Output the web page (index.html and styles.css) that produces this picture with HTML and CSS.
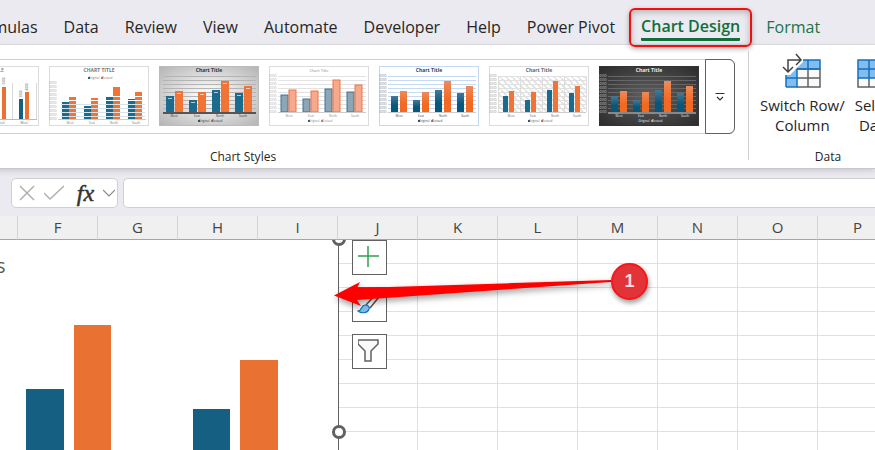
FILE: index.html
```
<!DOCTYPE html>
<html lang="en">

<head>
    <meta charset="UTF-8">
    <meta name="viewport" content="width=device-width, initial-scale=1.0">
    <title>Chart Design</title>
    <link rel="stylesheet" href="styles.css">
</head>

<body>
    <nav class="tabs">
        <a href="#" class="tab">Formulas</a>
        <a href="#" class="tab">Data</a>
        <a href="#" class="tab">Review</a>
        <a href="#" class="tab">View</a>
        <a href="#" class="tab">Automate</a>
        <a href="#" class="tab">Developer</a>
        <a href="#" class="tab">Help</a>
        <a href="#" class="tab">Power Pivot</a>
        <a href="#" class="tab active"><span>Chart Design</span></a>
        <a href="#" class="tab context">Format</a>
    </nav>

    <section class="ribbon">
        <div class="group styles-group">
            <div class="gallery">
                <div class="thumbs" id="thumbs"></div>
                <button class="more" aria-label="More styles">
                    <svg width="10" height="10" viewBox="0 0 10 10" fill="none" stroke="#333" stroke-width="1.2">
                        <path d="M.5 1.500h9M2 5l3 3 3-3" />
                    </svg>
                </button>
            </div>
            <div class="group-name">Chart Styles</div>
        </div>

        <div class="group data-group">
            <div class="commands">
                <button class="command">
                    <svg width="40" height="36" viewBox="0 0 40 36" fill="none">
                        <path d="M4 7h34v27H4z" fill="#fafafa" />
                        <path d="M4 7h34v9H15v18H4z" fill="#83bdee" />
                        <path d="M15 16h23M15 25h23M26 16v18M15 34h23V16" stroke="#616161" stroke-width="1.500" />
                        <path d="M4 34V7h34v9H4M4 25h11M4 34h11V7M26 7v9" stroke="#1072c4" stroke-width="1.500" />
                        <path d="M0 0h21v9L8 22H0z" fill="#fff" />
                        <path d="M6 19V7h13M1 14l5 5 5-5M14 1l5 6-5 5" stroke="#444" stroke-width="1.500" />
                    </svg>
                    <span>Switch Row/<br>Column</span>
                </button>
                <button class="command">
                    <svg width="40" height="36" viewBox="0 0 40 36" fill="none">
                        <path d="M3 7h34v27H3z" fill="#fafafa" />
                        <path d="M3 7h34v18H3z" fill="#83bdee" />
                        <path d="M3 25v9h34v-9M14 25v9M26 25v9" stroke="#616161" stroke-width="1.500" />
                        <path d="M3 7h34v18H3zM3 16h34M14 7v18M26 7v18" stroke="#1072c4" stroke-width="1.500" />
                    </svg>
                    <span>Select<br>Data</span>
                </button>
            </div>
            <div class="group-name">Data</div>
        </div>
    </section>

    <div class="formula-bar">
        <div class="formula-tools">
            <button aria-label="Cancel">
                <svg width="16" height="16" viewBox="0 0 16 16" fill="none" stroke="#b0b0b0" stroke-width="1.500"><path d="M1 1l14 14M15 1L1 15" /></svg>
            </button>
            <button aria-label="Enter">
                <svg width="20" height="16" viewBox="0 0 20 16" fill="none" stroke="#b0b0b0" stroke-width="1.500"><path d="M0 8l6 6L20 1" /></svg>
            </button>
            <button class="fx" aria-label="Insert function">fx</button>
            <button aria-label="Recent functions">
                <svg width="12" height="8" viewBox="0 0 12 8" fill="none" stroke="#888" stroke-width="1.200"><path d="M0 1l6 6 6-6" /></svg>
            </button>
        </div>
        <input type="text" class="formula" aria-label="Formula">
    </div>

    <main class="sheet">
        <table>
            <thead>
                <tr id="columns"></tr>
            </thead>
            <tbody id="cells"></tbody>
        </table>

        <div class="objects">
            <div class="chart">
                <h2>Sales</h2>
                <svg class="bars" width="300" height="240" viewBox="0 0 300 240">
                    <g fill="#156082">
                        <rect x="26" y="64" width="38" height="176" />
                        <rect x="193" y="84" width="37" height="156" />
                    </g>
                    <g fill="#e97132">
                        <rect x="74" y="0" width="37" height="240" />
                        <rect x="240" y="35" width="38" height="205" />
                    </g>
                </svg>
                <i class="handle top"></i>
                <i class="handle middle"></i>
            </div>

            <div class="chart-buttons">
                <button aria-label="Chart Elements">
                    <svg width="21" height="21" viewBox="0 0 21 21" stroke="#2f9e4f" stroke-width="1.500"><path d="M10 0v21M0 10h21" /></svg>
                </button>
                <button aria-label="Chart Styles">
                    <svg width="23" height="23" viewBox="0 0 23 23" fill="none">
                        <path d="M9 13L20 1M13 16L22 5" stroke="#555" stroke-width="1.500" />
                        <path d="M1 19c4 0 3-6 7-6 3 0 5 2 4 4-1 4-7 5-11 2z" fill="#83bdee" stroke="#1072c4" stroke-width="1.200" />
                    </svg>
                </button>
                <button aria-label="Chart Filters">
                    <svg width="21" height="23" viewBox="0 0 21 23" fill="#fafafa" stroke="#616161" stroke-width="1.500"><path d="M0 1h20v4l-7 7v10H7V12L0 5z" /></svg>
                </button>
            </div>

            <svg class="arrow" width="700" height="100" viewBox="0 0 700 100">
                <path d="M334 55.500L360 42l-3 6L611 40v2L357 60l4 6z" fill="#f00" />
            </svg>
            <div class="badge">1</div>
        </div>
    </main>

    <script src="script.js"></script>
</body>

</html>
```

FILE: styles.css
```
:root {
    --chrome: #ebeaf0;
    --green: #10703c;
    --line: #d0d0d0;
    --dark: #616161;
}

* {
    box-sizing: border-box;
}

body {
    margin: 0;
    height: 100vh;
    display: flex;
    flex-direction: column;
    overflow: hidden;
    background: var(--chrome);
    color: #262626;
    font-family: "Open Sans", "Noto Sans", sans-serif;
}

button {
    display: flex;
    align-items: center;
    justify-content: center;
    padding: 0;
    border: 0;
    background: none;
    color: inherit;
    font: inherit;
}

svg {
    display: block;
    flex: none;
}

/* tabs */
.tabs {
    display: flex;
    flex: none;
    align-items: center;
    gap: 26px;
    height: 45px;
    margin-left: -32px;
    padding-top: 10px;
    border-bottom: 1px solid #dedde2;
    white-space: nowrap;
}

.tab {
    color: inherit;
    font-size: 16px;
    line-height: 24px;
    text-decoration: none;
}

.tab.context {
    color: #217346;
}

.tab.active {
    position: relative;
    z-index: 2;
    margin: 0 -12px;
    padding: 4px 10px;
    border: 2px solid #f01010;
    border-radius: 6px;
    color: var(--green);
    font-weight: 600;
    box-shadow: 0 2px 5px rgba(0, 0, 0, 0.3), inset 0 2px 6px rgba(0, 0, 0, 0.25);
}

.tab.active span {
    display: block;
    border-bottom: 3px solid var(--green);
    border-radius: 1px;
}

/* ribbon */
.ribbon {
    position: relative;
    z-index: 1;
    display: flex;
    flex: none;
    height: 124px;
    margin-left: -262px;
    background: #fff;
    border-bottom: 1px solid #c8c8cc;
    box-shadow: 0 2px 5px rgba(0, 0, 0, 0.14);
}

.group {
    display: flex;
    flex: none;
    flex-direction: column;
    justify-content: space-between;
    padding-bottom: 3px;
}

.group-name {
    font-size: 12px;
    line-height: 16px;
    text-align: center;
}

.styles-group {
    width: 1010px;
    padding-top: 14px;
}

.gallery {
    display: flex;
    justify-content: flex-end;
    height: 75px;
    margin-right: 13px;
    border: 1px solid var(--line);
    border-right: 0;
    border-radius: 6px;
}

.thumbs {
    display: flex;
    gap: 10px;
    padding: 6px;
}

.more {
    width: 30px;
    margin: -1px 0;
    border: 1px solid var(--dark);
    border-radius: 0 6px 6px 0;
}

.data-group {
    position: relative;
    width: 160px;
}

.data-group::before {
    content: "";
    position: absolute;
    top: 6px;
    bottom: 8px;
    left: 0;
    border-left: 1px solid var(--line);
}

.commands {
    display: flex;
    padding: 8px 0 0 12px;
}

.command {
    flex-direction: column;
    gap: 6px;
    margin-right: 10px;
    font-size: 15px;
    line-height: 20px;
    white-space: nowrap;
}

/* formula bar */
.formula-bar {
    display: flex;
    flex: none;
    gap: 5px;
    height: 47px;
    padding: 9px 0 8px 11px;
}

.formula-tools {
    display: flex;
    align-items: center;
    justify-content: space-between;
    width: 107px;
    padding: 0 2px 0 7px;
    background: #fff;
    border: 1px solid var(--line);
    border-radius: 5px;
}

.fx {
    padding-left: 4px;
    font: italic 24px/24px "Liberation Serif", serif;
    color: #333;
    -webkit-text-stroke: 0.5px #333;
}

.formula {
    flex: 1;
    min-width: 0;
    padding: 0 8px;
    border: 1px solid var(--line);
    border-right: 0;
    border-radius: 5px 0 0 5px;
    font: 15px "Open Sans", sans-serif;
}

/* sheet */
.sheet {
    position: relative;
    flex: 1;
    overflow: hidden;
    background: #fff;
}

table {
    table-layout: fixed;
    width: 0;
    border-collapse: separate;
    border-spacing: 0;
}

th,
td {
    width: 80px;
    height: 24px;
    padding: 0;
    border-right: 1px solid #e0e0e0;
    border-bottom: 1px solid #e0e0e0;
}

th {
    background: #f0f0f0;
    border-right-color: #d4d4d4;
    border-bottom-color: #a6a6a6;
    color: #444;
    font-size: 15px;
    font-weight: 400;
    line-height: 23px;
}

/* the first column is scrolled mostly out of view */
th:first-child {
    width: 18px;
}

.objects {
    position: absolute;
    inset: 24px 0 0;
    overflow: hidden;
}

.chart {
    position: absolute;
    top: -1px;
    left: -376px;
    width: 715px;
    height: 386px;
    padding-top: 12px;
    background: #fff;
    border: 1px solid var(--dark);
}

.chart h2 {
    margin: 0 0 45px;
    color: #595959;
    font-size: 20px;
    font-weight: 400;
    line-height: 28px;
    text-align: center;
}

.bars {
    margin-left: 375px;
}

.handle {
    position: absolute;
    right: -8px;
    width: 14px;
    height: 14px;
    background: #fff;
    border: 3px solid var(--dark);
    border-radius: 50%;
}

.handle.top {
    top: -8px;
}

.handle.middle {
    top: 185px;
}

.chart-buttons {
    position: absolute;
    top: 0;
    left: 352px;
    display: flex;
    flex-direction: column;
    gap: 12px;
}

.chart-buttons button {
    width: 35px;
    height: 35px;
    padding: 0 2px 2px 0;
    background: #fff;
    border: 1px solid var(--dark);
}

.arrow {
    position: absolute;
    top: 0;
    left: 0;
    filter: drop-shadow(1px 3px 3px rgba(0, 0, 0, 0.4));
}

.badge {
    position: absolute;
    top: 23px;
    left: 611px;
    width: 37px;
    height: 37px;
    background: #e23338;
    border: 2px solid #fb1418;
    border-radius: 50%;
    box-shadow: 1px 3px 5px rgba(0, 0, 0, 0.4);
    color: #fbdcdc;
    font: bold 18px/33px "Liberation Sans", sans-serif;
    text-align: center;
}

/* thumbnails */
.thumb {
    width: 100px;
    height: 60px;
    font: 5px "Open Sans", sans-serif;
}
```

FILE: script.js
```
const bluePos = [12, 34, 56, 78];
const blueTops = [30, 34, 24, 27];
const orangeTops = [25, 26, 15, 20];

const styles = [
    { id: 'split', split: true, border: '#dcdcdc', bg: '#fff', text: '#666' },
    { id: 'stripe', base: 53, shift: 6, start: 1, title: 'CHART TITLE', gap: 7, border: '#dcdcdc', bg: '#fff', text: '#777', stripes: true },
    { id: 'gray', base: 46, shift: 0, start: -5, gap: 9, width: 8, border: '#bbb', bg: 'url(#grayBg)', grid: '#b4b4b4', text: '#333', axis: '#555', noScale: true },
    { id: 'light', base: 46, shift: -1, gap: 8, border: '#dcdcdc', bg: '#fff', grid: '#e2e2e2', text: '#888', blue: '#8ea5b6', orange: '#f6a98c', outline: true },
    { id: 'lines', base: 46, shift: 0, gap: 9, border: '#c5daf2', bg: '#fff', grid: '#c5daf2', text: '#345', shade: true },
    { id: 'hatch', base: 46, shift: 0, gap: 6, width: 5, start: 2, border: '#dcdcdc', bg: '#fff', grid: '#e0e0e0', text: '#666', hatch: true },
    { id: 'dark', base: 46, shift: 0, gap: 9, border: '#333', bg: 'url(#darkBg)', grid: '#666', text: '#eee', axis: '#888', shade: true }
];

const defs = `<defs>
    <radialGradient id="grayBg" r="0.7"><stop offset="0.2" stop-color="#f4f4f4"/><stop offset="1" stop-color="#b4b4b4"/></radialGradient>
    <radialGradient id="darkBg" r="0.7"><stop offset="0" stop-color="#606060"/><stop offset="1" stop-color="#2c2c2c"/></radialGradient>
    <linearGradient id="blueBar" x2="0" y2="1"><stop stop-color="#467895"/><stop offset="0.6" stop-color="#07567c"/></linearGradient>
    <linearGradient id="orangeBar" x2="0" y2="1"><stop stop-color="#ef8a5c"/><stop offset="0.6" stop-color="#f26a21"/></linearGradient>
    <pattern id="hatch" width="6" height="6" patternUnits="userSpaceOnUse"><path d="M0 0l6 6" stroke="#dcdcdc" stroke-width="1.5"/></pattern>
</defs>`;

function rect(x, y, w, h, fill, extra = '') {
    return `<rect x="${x}" y="${y}" width="${w}" height="${h}" fill="${fill}" ${extra}/>`;
}

function label(x, y, size, text, fill, extra = '') {
    return `<text x="${x}" y="${y}" font-size="${size}" fill="${fill}" text-anchor="middle" ${extra}>${text}</text>`;
}

function splitThumb(s) {
    let out = '';
    [73, 97].forEach(x => out += rect(x, 17, 1, 36, '#d8d8d8'));
    out += rect(58, 21, 1, 32, '#156082') + rect(63, 21, 4, 32, '#e97132');
    out += rect(80, 33, 4, 20, '#156082') + rect(86, 26, 4, 27, '#e97132');
    out += rect(0, 53, 98, 1, '#bbb');
    out += label(0, 0, 3, '5000', s.text, 'transform="translate(66 15) rotate(-90)"');
    out += label(0, 0, 3, '3000', s.text, 'transform="translate(83 28) rotate(-90)"');
    out += label(0, 0, 3, '4000', s.text, 'transform="translate(89 21) rotate(-90)"');
    out += label(62, 58, 3, 'West', s.text) + label(85, 58, 3, 'West', s.text);
    out += label(50, 6, 5, 'CHART TITLE', s.text);
    return out;
}

function barThumb(s) {
    let out = '';
    const left = s.noScale ? 4 : 9;
    const w = s.width || 7;
    const start = s.start || 0;
    if (s.hatch) out += rect(9, 10, 88, 36, 'url(#hatch)');
    if (s.grid) {
        for (let y = 10; y < s.base; y += 4) out += rect(left, y, 97 - left, 1, s.grid);
    }
    if (s.hatch) [9, 31, 53, 75, 97].forEach(x => out += rect(x, 10, 1, 36, '#ddd'));

    bluePos.forEach((pos, i) => {
        const x = pos + start + (s.noScale ? i : 0);
        const blue = s.shade ? 'url(#blueBar)' : s.blue || '#1b6b8f';
        const orange = s.shade ? 'url(#orangeBar)' : s.orange || '#ef7435';
        const by = blueTops[i] + s.shift;
        const oy = orangeTops[i] + s.shift;
        out += rect(x, by, w, s.base - by, blue, s.outline ? 'stroke="#3f7591"' : '');
        out += rect(x + s.gap, oy, w, s.base - oy, orange, s.outline ? 'stroke="#ee7548"' : '');
        if (s.noScale) {
            out += rect(x + 2, by + 2, 4, 1, '#b5ccd6') + rect(x + s.gap + 2, oy + 2, 4, 1, '#f8cdb4');
        }
        out += label(x + 8, s.base + 5, 3, ['West', 'East', 'North', 'South'][i], s.text);
    });

    if (s.stripes) {
        for (let y = 38; y < s.base; y += 4) out += rect(12, y, 84, 1, '#d5e2e8');
        for (let y = 30; y < 38; y += 4) out += rect(12, y, 84, 1, '#fff');
    }
    out += rect(left, s.base, 97 - left, s.axis ? 2 : 1, s.axis || '#ccc');
    if (!s.noScale) {
        for (let y = s.base - 35; y <= s.base + 1; y += 4) out += label(4, y, 3, '6000', s.text, 'opacity="0.7"');
    }

    out += label(50, 6, s.outline ? 4 : 5, s.title || 'Chart Title', s.text, s.outline ? '' : 'font-weight="bold"');
    const ly = s.stripes ? 13 : 56;
    out += rect(39, ly - 2, 2, 2, '#156082') + label(45, ly, 3, 'Original', s.text);
    out += rect(52, ly - 2, 2, 2, '#e97132') + label(58, ly, 3, 'Revised', s.text);
    return out;
}

document.getElementById('thumbs').innerHTML = styles.map((s, i) => `
    <svg class="thumb" viewBox="0 0 100 60" aria-label="Style ${i + 1}">
        ${i === 0 ? defs : ''}
        <rect x="0.5" y="0.5" width="99" height="59" fill="${s.bg}" stroke="${s.border}"/>
        ${s.split ? splitThumb(s) : barThumb(s)}
    </svg>`).join('');

// column letters, starting with the cut off column before F
const letters = ' FGHIJKLMNOPQRSTUVWXYZ'.split('');
document.getElementById('columns').innerHTML = letters.map(l => `<th scope="col">${l}</th>`).join('');
document.getElementById('cells').innerHTML = `<tr>${'<td></td>'.repeat(letters.length)}</tr>`.repeat(40);
```
